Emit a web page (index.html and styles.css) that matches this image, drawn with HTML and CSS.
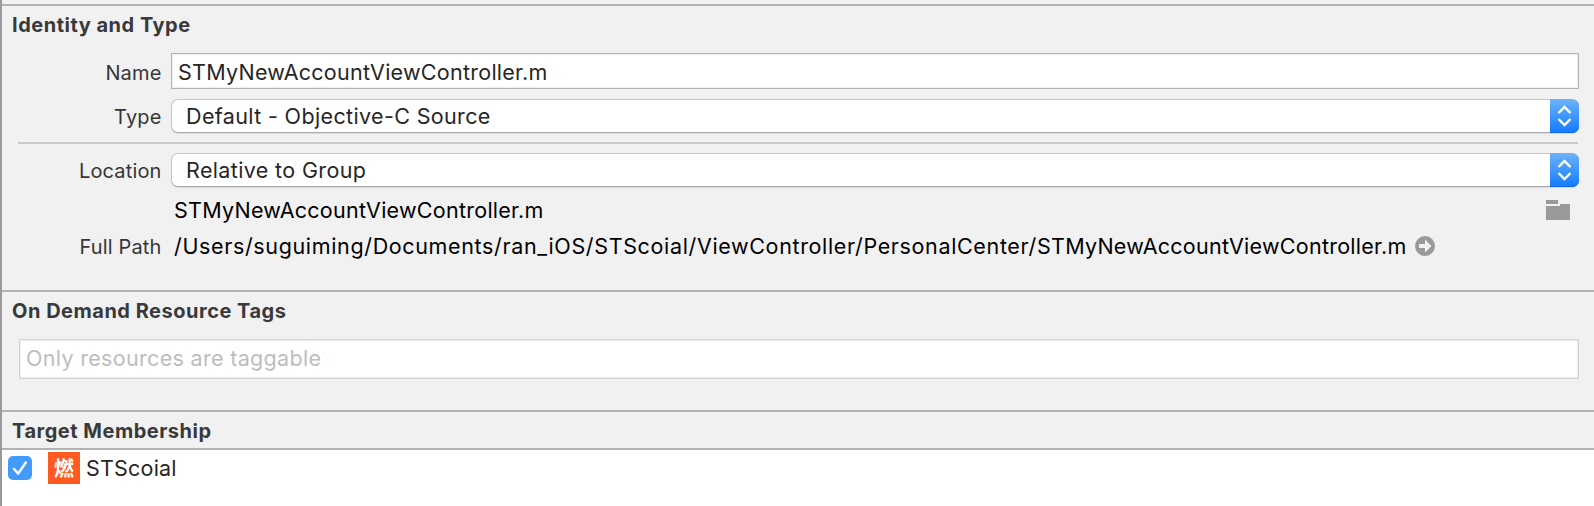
FILE: index.html
```
<!DOCTYPE html>
<html lang="en">
<head>
<meta charset="utf-8">
<title>File Inspector</title>
<link rel="stylesheet" href="styles.css">
</head>
<body>
<main class="inspector">
  <section class="section identity">
    <h2 class="heading">Identity and Type</h2>
    <div class="row row-name">
      <label class="label">Name</label>
      <div class="field"><span class="t-file">STMyNewAccountViewController.m</span></div>
    </div>
    <div class="row row-select">
      <label class="label">Type</label>
      <div class="select"><span class="t-type">Default - Objective-C Source</span>
        <svg class="stepper" viewBox="0 0 29 34"><path d="M8.5 14 14.5 8 20.5 14M8.5 20 14.5 26 20.5 20"/></svg>
      </div>
    </div>
    <div class="divider"></div>
    <div class="row row-select">
      <label class="label">Location</label>
      <div class="select"><span class="t-type">Relative to Group</span>
        <svg class="stepper" viewBox="0 0 29 34"><path d="M8.5 14 14.5 8 20.5 14M8.5 20 14.5 26 20.5 20"/></svg>
      </div>
    </div>
    <div class="row row-file">
      <span class="label"></span>
      <span class="path t-file">STMyNewAccountViewController.m</span>
      <svg class="folder" viewBox="0 0 24 20"><path d="M0 0h12v4H0zM0 6h14V4h10v16H0z"/></svg>
    </div>
    <div class="row row-path">
      <label class="label">Full Path</label>
      <span class="path"><span class="t-dir">/Users/suguiming/Documents/ran_iOS/STScoial/ViewController/PersonalCenter/</span><span class="t-file">STMyNewAccountViewController.m</span></span>
      <svg class="reveal" viewBox="0 0 20 20"><circle cx="10" cy="10" r="10"/><path d="M4 8h6V3.5L16.5 10 10 16.5V12H4z"/></svg>
    </div>
  </section>
  <section class="section tags">
    <h2 class="heading">On Demand Resource Tags</h2>
    <div class="field tagfield"><span class="t-tags">Only resources are taggable</span></div>
  </section>
  <section class="section target">
    <h2 class="heading">Target Membership</h2>
  </section>
  <div class="members">
    <svg class="check" viewBox="0 0 24 24"><rect width="24" height="24" rx="5"/><path d="M6 13 10.2 17.6 17.8 6.5"/></svg>
    <span class="app">燃</span>
    <span class="t-app">STScoial</span>
  </div>
</main>
</body>
</html>
```
FILE: styles.css
```
* { box-sizing: border-box; }
body { margin: 0; background: #f1f1f1; }
.inspector {
  width: 1594px; height: 506px; overflow: hidden;
  padding-top: 4px; border-left: 2px solid #999;
  background: #f1f1f1; color: #262626;
  font: 21.5px/24px Inter, "Noto Sans CJK SC", sans-serif;
  display: flex; flex-direction: column;
}
.inspector span { white-space: nowrap; }
.section { border-top: 2px solid #b2b2b2; padding: 7px 15px 0 10px; flex: none; }
.identity { height: 286px; }
.tags { height: 120px; }
.target { height: 38px; }
.heading { margin: 0; font-size: 20px; line-height: 24px; font-weight: 700; color: #39393b; letter-spacing: .51px; }
.row { display: flex; align-items: flex-start; }
.label { width: 149.5px; margin-right: 9.5px; padding-top: 8px; text-align: right; font-size: 20px; letter-spacing: .15px; color: #363636; flex: none; }
.field { flex: 1; height: 36px; background: #fff; border: 1px solid #b2b2b2; box-shadow: inset 0 0 0 1px #f0f0f0; padding: 6px 0 0 6px; }
.row-name { margin-top: 16px; }
.row-select { margin-top: 10px; }
.select {
  flex: 1; height: 34px; background: #fff; border: 1px solid #c6c6c6; border-bottom-color: #ababab;
  border-radius: 7px; box-shadow: 0 1px 1px #d9d9d9; padding: 4px 0 0 14px;
  display: flex; justify-content: space-between;
}
.row-select .label { padding-top: 6px; }
.stepper { width: 29px; height: 34px; margin: -5px -1px 0 0; background: linear-gradient(#6cb3fa, #147aff); border-radius: 0 7px 7px 0; box-shadow: inset 0 -1px #0a68f5; flex: none; }
.stepper path { fill: none; stroke: #fff; stroke-width: 2.4; }
.divider { height: 2px; background: #cacaca; margin: 9px 1px -1px 6px; }
.path { color: #000; margin-left: 3px; }
.t-file { letter-spacing: .26px; }
.t-type { letter-spacing: .36px; }
.t-dir { letter-spacing: .645px; }
.t-tags { letter-spacing: .32px; }
.row-file { margin-top: 11px; }
.folder { width: 24px; height: 20px; margin: 2px 9px 0 auto; fill: #999; }
.row-path { margin-top: 12px; }
.row-path .label { padding-top: 1px; }
.reveal { width: 20px; height: 20px; margin: 2px 0 0 8px; fill: #999; flex: none; }
.reveal path { fill: #f1f1f1; }
.tagfield { height: 40px; margin: 16px 0 0 7px; border-color: #d2d2d2; color: #bdbdbd; }
.members { border-top: 2px solid #b2b2b2; background: #fff; flex: 1; display: flex; align-items: flex-start; padding: 2px 0 0 6px; }
.check { width: 24px; height: 24px; margin-top: 4px; fill: #429bfb; }
.check path { fill: none; stroke: #fff; stroke-width: 2.4; stroke-linecap: round; stroke-linejoin: round; }
.app { width: 32px; height: 32px; margin: 0 6px 0 16px; background: #ff5a1f; color: #fff; font: 700 20px/31px "Noto Sans CJK SC", sans-serif; text-align: center; }
.t-app { padding-top: 4px; letter-spacing: .2px; }
```
